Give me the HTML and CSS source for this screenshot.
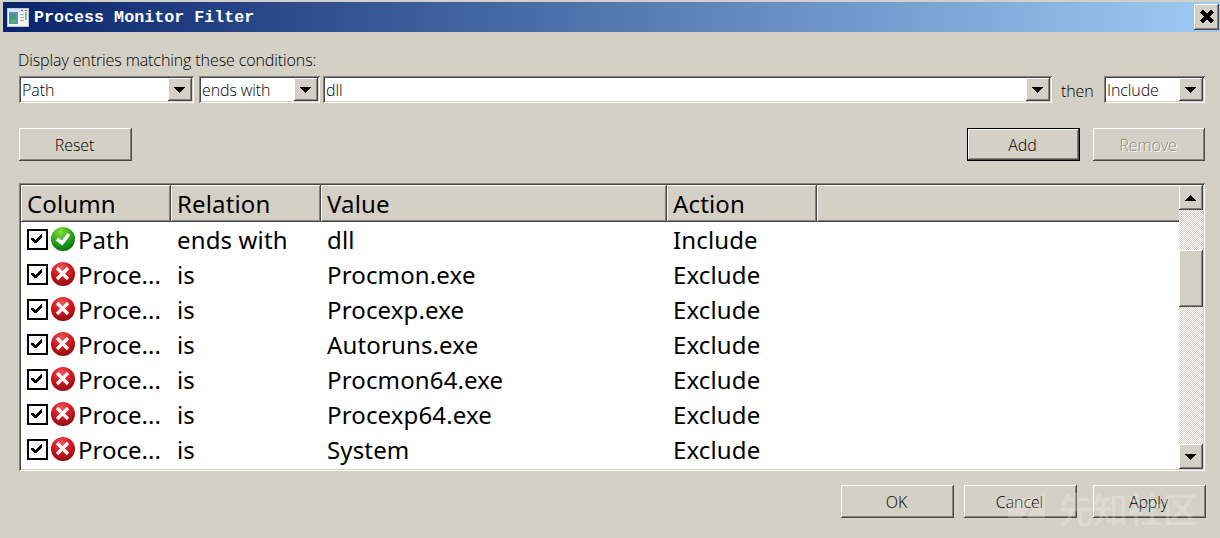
FILE: index.html
```html
<!DOCTYPE html>
<html lang="en">
<head>
<meta charset="utf-8">
<title>Process Monitor Filter</title>
<link rel="stylesheet" href="styles.css">
</head>
<body>
<svg class="defs" width="0" height="0" aria-hidden="true">
  <defs>
    <radialGradient id="red" cx="45%" cy="25%" r="75%"><stop offset="0" stop-color="#f0585a"/><stop offset=".5" stop-color="#d81a20"/><stop offset="1" stop-color="#8e0a0e"/></radialGradient>
    <radialGradient id="green" cx="40%" cy="20%" r="80%"><stop offset="0" stop-color="#8fdc3c"/><stop offset=".5" stop-color="#35ab22"/><stop offset="1" stop-color="#08720c"/></radialGradient>
    <symbol id="down" viewBox="0 0 11 6"><path d="M0 0h11v1h-1v1h-1v1h-1v1h-1v1h-1v1h-1v-1h-1v-1h-1v-1h-1v-1h-1v-1h-1z"/></symbol>
    <symbol id="box" viewBox="0 0 21 21"><path fill="#fff" stroke="#000" stroke-width="2" d="M1 1h19v19H1z"/><path d="M4 9h2l2 2 6-6h1v3l-6 6H8l-4-3z"/></symbol>
    <symbol id="no" viewBox="0 0 24 24"><circle cx="12" cy="12" r="12" fill="url(#red)"/><path d="M6 6l11 11M17 6L6 17" stroke="#fff" stroke-width="3.200"/></symbol>
    <symbol id="yes" viewBox="0 0 24 24"><circle cx="12" cy="12" r="12" fill="url(#green)"/><path d="M6 12l5 4 7-9" fill="none" stroke="#fff" stroke-width="3.6"/></symbol>
  </defs>
</svg>
<div class="window">
  <header class="titlebar">
    <svg class="app-icon" width="22" height="19" viewBox="0 0 22 19"><path fill="#f4f4f0" stroke="#bfc5cb" d="M.5.5h21v18H.5z"/><path fill="#dde6ee" d="M1 1h20v3H1z"/><path fill="#5b8fc0" d="M2 4h9v12H2z"/><path fill="#3d9b83" d="M3 6h6v8H3z"/><path fill="#58b35c" d="M4 11h5v4H4z"/><path stroke="#aaa" d="M13 6.500h4M13 9.500h4M13 12.500h4"/><path stroke="#8fbc9d" stroke-width="2" d="M19 4v8"/><path stroke="#657d97" d="M14 2.500h2M18 2.500h2"/></svg>
    <h1 class="title">Process Monitor Filter</h1>
    <button class="btn close" aria-label="Close"><svg width="14" height="13" viewBox="0 0 14 13"><path d="M1.500 1l11 11M12.500 1l-11 11" stroke="#000" stroke-width="3.600"/></svg></button>
  </header>
  <main class="content">
    <p class="prompt">Display entries matching these conditions:</p>
    <div class="conditions">
      <div class="combo c-column"><span>Path</span><b class="btn drop"><svg width="11" height="6"><use href="#down"/></svg></b></div>
      <div class="combo c-relation"><span>ends with</span><b class="btn drop"><svg width="11" height="6"><use href="#down"/></svg></b></div>
      <div class="combo c-value"><span>dll</span><b class="btn drop"><svg width="11" height="6"><use href="#down"/></svg></b></div>
      <span class="then">then</span>
      <div class="combo c-action"><span>Include</span><b class="btn drop"><svg width="11" height="6"><use href="#down"/></svg></b></div>
    </div>
    <div class="actions">
      <button class="btn push reset">Reset</button>
      <button class="btn push default">Add</button>
      <button class="btn push disabled">Remove</button>
    </div>
    <section class="list">
      <div class="table">
        <div class="grid head"><span>Column</span><span>Relation</span><span>Value</span><span>Action</span><span></span></div>
        <div class="rows">
          <div class="grid row"><span class="first"><svg class="check"><use href="#box"/></svg><svg class="state"><use href="#yes"/></svg>Path</span><span>ends with</span><span>dll</span><span>Include</span></div>
          <div class="grid row"><span class="first"><svg class="check"><use href="#box"/></svg><svg class="state"><use href="#no"/></svg>Proce...</span><span>is</span><span>Procmon.exe</span><span>Exclude</span></div>
          <div class="grid row"><span class="first"><svg class="check"><use href="#box"/></svg><svg class="state"><use href="#no"/></svg>Proce...</span><span>is</span><span>Procexp.exe</span><span>Exclude</span></div>
          <div class="grid row"><span class="first"><svg class="check"><use href="#box"/></svg><svg class="state"><use href="#no"/></svg>Proce...</span><span>is</span><span>Autoruns.exe</span><span>Exclude</span></div>
          <div class="grid row"><span class="first"><svg class="check"><use href="#box"/></svg><svg class="state"><use href="#no"/></svg>Proce...</span><span>is</span><span>Procmon64.exe</span><span>Exclude</span></div>
          <div class="grid row"><span class="first"><svg class="check"><use href="#box"/></svg><svg class="state"><use href="#no"/></svg>Proce...</span><span>is</span><span>Procexp64.exe</span><span>Exclude</span></div>
          <div class="grid row"><span class="first"><svg class="check"><use href="#box"/></svg><svg class="state"><use href="#no"/></svg>Proce...</span><span>is</span><span>System</span><span>Exclude</span></div>
        </div>
      </div>
      <div class="scrollbar">
        <b class="btn arrow"><svg class="up" width="11" height="6"><use href="#down"/></svg></b>
        <i class="btn thumb"></i>
        <b class="btn arrow end"><svg width="11" height="6"><use href="#down"/></svg></b>
      </div>
    </section>
    <footer class="footer">
      <button class="btn push">OK</button>
      <button class="btn push">Cancel</button>
      <button class="btn push apply">Apply</button>
    </footer>
  </main>
  <div class="watermark"><svg width="38" height="28" viewBox="0 0 38 28"><path fill="#fff" d="M0 8h27L14 28H0zM37 0v28H19z"/></svg><span>先知社区</span></div>
</div>
</body>
</html>
```
FILE: styles.css
```css
* { box-sizing: border-box; }
body { margin: 0; background: #d5d0c5; color: #000; font: 300 16px/20px "Open Sans", "Noto Sans", sans-serif; letter-spacing: -.1px; overflow: hidden; }
button { font: inherit; color: inherit; letter-spacing: inherit; padding: 0; }
svg { display: block; flex: none; shape-rendering: crispEdges; }
.defs { position: absolute; }
.window { position: relative; width: 1220px; height: 538px; padding: 2px 0 0 3px; }
.titlebar { height: 30px; display: flex; align-items: center; padding: 0 1px 0 4px; background: linear-gradient(90deg, #08246b, #9fcbf5); }
.title { margin: 2px auto 0 5px; color: #fff; font: bold 16.67px/20px "Liberation Mono", monospace; letter-spacing: 0.020px; white-space: pre; }
.btn { background: #d5d0c5; border: 0; border-radius: 0; display: flex; align-items: center; justify-content: center; box-shadow: inset -1px -1px #484848, inset 1px 1px #fff, inset -2px -2px #858380; }
.close { width: 25px; height: 26px; }
.close svg { margin-bottom: 2px; }
.content { padding: 18px 15px 0 15px; }
.prompt { margin: 0; height: 26px; white-space: nowrap; }
.conditions { display: flex; height: 28px; align-items: flex-start; }
.combo { height: 27px; margin-left: 1px; padding: 2px; background: #fff; display: flex; justify-content: space-between; align-items: stretch; white-space: nowrap; box-shadow: inset 1px 1px #858380, inset -1px -1px #fff, inset 2px 2px #484848, inset -2px -2px #d5d0c5; }
.combo span { padding: 2px 0 0 1px; }
.drop { width: 24px; padding-right: 1px; }
.c-column { width: 175px; }
.c-relation { width: 121px; margin-left: 5px; }
.c-value { width: 729px; margin-left: 3px; }
.then { margin: 5px 11px 0 9px; width: 32px; white-space: nowrap; }
.c-action { width: 101px; margin-left: 0; }
.actions { display: flex; margin: 24px 0 0 1px; }
.push { width: 113px; height: 33px; padding-right: 2px; }
.reset { margin-right: auto; }
.default { border: 1px solid #000; margin-right: 13px; }
.disabled { width: 112px; color: #8d8981; text-shadow: 1px 1px #fff; }
.list { margin: 22px 0 0 1px; width: 1186px; height: 288px; padding: 2px; display: flex; background: #fff; box-shadow: inset 1px 1px #858380, inset -1px -1px #fff, inset 2px 2px #484848, inset -2px -2px #d5d0c5; }
.table { flex: 1; font: 400 24px/34px "Noto Sans", sans-serif; letter-spacing: .14px; }
.grid { display: grid; grid-template-columns: 150px 150px 346px 150px 1fr; white-space: nowrap; }
.head { height: 37px; }
.head span { background: #d5d0c5; padding: 2px 0 0 6px; box-shadow: inset -1px -1px #484848, inset 1px 1px #fff, inset -2px -2px #858380; }
.head span:last-child { box-shadow: inset 0 -1px #484848, inset 1px 1px #fff, inset 0 -2px #858380; }
.rows { padding-top: 1px; }
.row { height: 35px; }
.row span { padding-left: 6px; }
.row .first { display: flex; letter-spacing: 0; }
.check { width: 21px; height: 21px; margin: 6px 3px 0 0; }
.state { width: 24px; height: 24px; margin: 4px 3px 0 0; shape-rendering: auto; }
.scrollbar { width: 24px; display: flex; flex-direction: column; background: repeating-conic-gradient(#d5d0c5 0 25%, #fff 0 50%) 0 0 / 2px 2px; }
.arrow { height: 25px; width: 24px; padding-right: 1px; }
.up { transform: scaleY(-1); }
.thumb { height: 57px; margin-top: 40px; }
.end { margin-top: auto; }
.footer { display: flex; justify-content: flex-end; gap: 10px; margin: 14px -1px 0 0; }
.apply { margin-left: 6px; }
.watermark { position: absolute; left: 1008px; top: 490px; display: flex; gap: 12px; opacity: .22; color: #fff; font: 500 35px/35px "Noto Sans CJK SC", sans-serif; letter-spacing: 0; pointer-events: none; white-space: nowrap; }
```
